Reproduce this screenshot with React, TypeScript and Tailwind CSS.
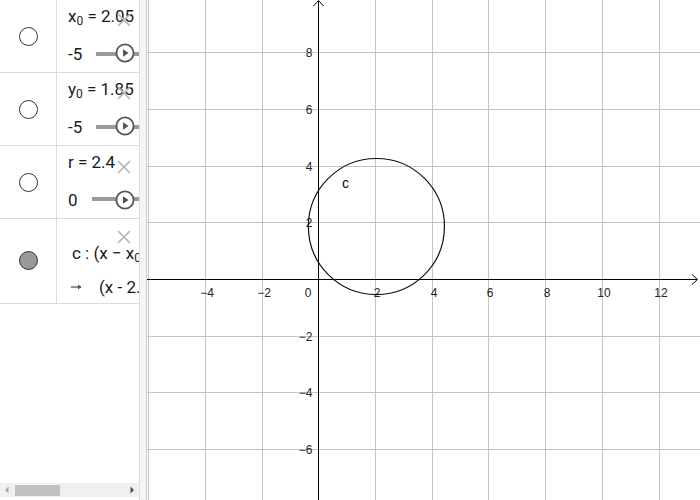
import React from 'react';

const U = 28.35;
const OX = 318.3;
const OY = 279;

const px = (v: number) => Math.round(OX + v * U) + 0.5;
const py = (v: number) => Math.round(OY - v * U) + 0.5;

const CloseIcon = () => (
  <svg width="16" height="16" viewBox="0 0 16 16" className="block">
    <path d="M2 2 L14 14 M14 2 L2 14" stroke="#b4b4b4" strokeWidth="1.6" fill="none" />
  </svg>
);

const PlayIcon = () => (
  <svg width="20" height="20" viewBox="0 0 20 20" className="block">
    <circle cx="10" cy="10" r="8.6" fill="white" stroke="#555" strokeWidth="1.8" />
    <path d="M8 6.3 L13.6 10 L8 13.7 Z" fill="#555" />
  </svg>
);

interface SliderRowProps {
  label: React.ReactNode;
  min: string;
  minWidth: string;
  barOffset: string;
  playTop: string;
  closeTop: string;
}

const SliderRow: React.FC<SliderRowProps> = ({ label, min, minWidth, barOffset, playTop, closeTop }) => (
  <div className="flex h-[73px] border-b border-[#dcdcdc]">
    <div className="flex w-[57px] shrink-0 items-center justify-center border-r border-[#dcdcdc]">
      <div className="h-[19px] w-[19px] rounded-full border border-[#333] bg-white" />
    </div>
    <div className="relative flex-1 overflow-hidden pl-[11px]">
      <div className="mt-[6px] h-[21px] whitespace-nowrap text-[17px] leading-[21px] text-[#1a1a1a]">{label}</div>
      <div className="mt-[17px] flex h-[20px] items-center">
        <span className={`${minWidth} text-[17px] leading-[20px] text-[#1a1a1a]`}>{min}</span>
        <div className={`${barOffset} h-[4px] flex-1 bg-[#9a9a9a]`} />
      </div>
      <div className={`absolute left-[58px] ${playTop}`}>
        <PlayIcon />
      </div>
      <div className={`absolute left-[59px] ${closeTop}`}>
        <CloseIcon />
      </div>
    </div>
  </div>
);

const Graphics = () => {
  const vx = [-6, -4, -2, 2, 4, 6, 8, 10, 12];
  const hy = [-6, -4, -2, 2, 4, 6, 8];
  const xl = [-4, -2, 2, 4, 6, 8, 10, 12];
  const yl = [8, 6, 4, 2, -2, -4, -6];
  const label = (n: number) => (n < 0 ? `\u2212${-n}` : `${n}`);
  const ax = px(0);
  const ay = py(0);
  return (
    <svg width="553" height="500" viewBox="147 0 553 500" className="block">
      <rect x="147" y="0" width="553" height="500" fill="white" />
      {vx.map((v) => (
        <line key={`v${v}`} x1={px(v)} y1="0" x2={px(v)} y2="500" stroke="#c4c4c4" strokeWidth="1" />
      ))}
      {hy.map((v) => (
        <line key={`h${v}`} x1="147" y1={py(v)} x2="700" y2={py(v)} stroke="#c4c4c4" strokeWidth="1" />
      ))}
      <line x1="147" y1={ay} x2="697" y2={ay} stroke="#000" strokeWidth="1" />
      <path d={`M${692} ${ay - 5} L697.5 ${ay} L${692} ${ay + 5}`} stroke="#000" fill="none" strokeWidth="1" />
      <line x1={ax} y1="1" x2={ax} y2="500" stroke="#000" strokeWidth="1" />
      <path d={`M${ax - 5} 6 L${ax} 0.5 L${ax + 5} 6`} stroke="#000" fill="none" strokeWidth="1" />
      <g fontFamily="'Liberation Sans', Arial, sans-serif" fontSize="12" fill="#222">
        {xl.map((v) => (
          <text key={`xl${v}`} x={px(v) + 1.5} y={ay + 17} textAnchor="middle">
            {label(v)}
          </text>
        ))}
        <text x={ax - 7} y={ay + 17} textAnchor="end">0</text>
        {yl.map((v) => (
          <text key={`yl${v}`} x={ax - 6} y={py(v) + 4.5} textAnchor="end">
            {label(v)}
          </text>
        ))}
      </g>
      <circle cx={OX + 2.05 * U} cy={OY - 1.85 * U} r={2.4 * U} fill="none" stroke="#111" strokeWidth="1.2" />
      <text x="342" y="188" fontFamily="'Liberation Sans', Arial, sans-serif" fontSize="14" fill="#111">c</text>
    </svg>
  );
};

export default function App() {
  return (
    <div className="flex h-[500px] w-[700px] overflow-hidden bg-white font-['Roboto',_'Liberation_Sans',_sans-serif]">
      <div className="flex w-[139px] shrink-0 flex-col overflow-hidden">
        <SliderRow
          label={
            <>
              x<sub className="text-[12px]">0</sub> = 2.05
            </>
          }
          min="-5"
          minWidth="w-[28px]"
          barOffset=""
          playTop="top-[43px]"
          closeTop="top-[12px]"
        />
        <SliderRow
          label={
            <>
              y<sub className="text-[12px]">0</sub> = 1.85
            </>
          }
          min="-5"
          minWidth="w-[28px]"
          barOffset=""
          playTop="top-[43px]"
          closeTop="top-[12px]"
        />
        <SliderRow
          label={<>r = 2.4</>}
          min="0"
          minWidth="w-[24px]"
          barOffset="-mt-[2px]"
          playTop="top-[44px]"
          closeTop="top-[13px]"
        />
        <div className="flex h-[85px] border-b border-[#dcdcdc]">
          <div className="flex w-[57px] shrink-0 items-center justify-center border-r border-[#dcdcdc]">
            <div className="mt-[-2px] h-[19px] w-[19px] rounded-full border border-[#333] bg-[#999]" />
          </div>
          <div className="relative flex-1 overflow-hidden pl-[15px]">
            <div className="mt-[24px] h-[20px] whitespace-nowrap text-[17px] leading-[20px] text-[#1a1a1a]">
              c : (x − x<sub className="text-[12px]">0</sub>)² + (y − y<sub className="text-[12px]">0</sub>)² = r²
            </div>
            <div className="mt-[14px] flex h-[20px] items-center whitespace-nowrap text-[17px] leading-[20px] text-[#1a1a1a]">
              <svg width="12" height="8" viewBox="0 0 12 8" className="ml-[-1px] mr-[16px] block shrink-0">
                <path d="M0 4 H10" stroke="#555" strokeWidth="1.3" />
                <path d="M7 1.5 L10.5 4 L7 6.5 Z" fill="#555" />
              </svg>
              <span>(x - 2.05)² + (y - 1.85)² = 5.76</span>
            </div>
            <div className="absolute left-[59px] top-[10px]">
              <CloseIcon />
            </div>
          </div>
        </div>
        <div className="flex-1" />
        <div className="mb-[3px] flex h-[14px] items-center bg-[#f0f0f0]">
          <svg width="15" height="14" viewBox="0 0 15 14" className="block shrink-0">
            <path d="M8.5 3.5 L5 7 L8.5 10.5 Z" fill="#a8a8a8" />
          </svg>
          <div className="h-[11px] w-[45px] bg-[#c1c1c1]" />
          <div className="flex-1" />
          <svg width="15" height="14" viewBox="0 0 15 14" className="block shrink-0">
            <path d="M6.5 3.5 L10 7 L6.5 10.5 Z" fill="#505050" />
          </svg>
        </div>
      </div>
      <div className="w-[8px] shrink-0 border-l border-r border-l-[#dedede] border-r-[#cfcfcf] bg-[#f5f5f5]" />
      <Graphics />
    </div>
  );
}
